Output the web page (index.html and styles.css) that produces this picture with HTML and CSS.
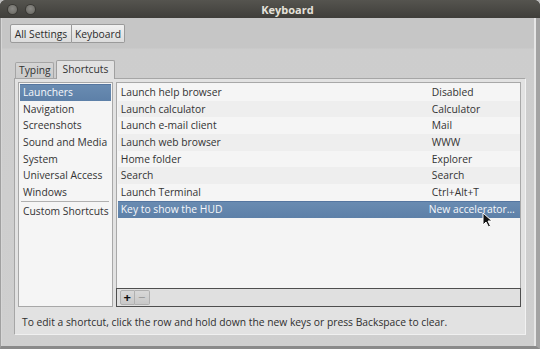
FILE: index.html
```html
<!DOCTYPE html>
<html>
<head>
<meta charset="utf-8">
<link rel="stylesheet" href="styles.css">
</head>
<body>
<div class="window">
  <div class="titlebar">
    <div class="wbtns"><span class="wbtn"></span><span class="wbtn"></span></div>
    <div class="title">Keyboard</div>
  </div>
  <div class="body">
    <div class="crumbs">
      <button class="crumb">All Settings</button><button class="crumb">Keyboard</button>
    </div>
    <div class="tabs">
      <div class="tab">Typing</div>
      <div class="tab active">Shortcuts</div>
    </div>
    <div class="panel">
      <div class="main">
        <div class="cats">
          <div class="row sel">Launchers</div>
          <div class="row">Navigation</div>
          <div class="row">Screenshots</div>
          <div class="row">Sound and Media</div>
          <div class="row">System</div>
          <div class="row">Universal Access</div>
          <div class="row">Windows</div>
          <div class="sep"></div>
          <div class="row">Custom Shortcuts</div>
        </div>
        <div class="right">
          <div class="tree">
            <div class="trow"><span class="name">Launch help browser</span><span class="accel">Disabled</span></div>
            <div class="trow alt"><span class="name">Launch calculator</span><span class="accel">Calculator</span></div>
            <div class="trow"><span class="name">Launch e-mail client</span><span class="accel">Mail</span></div>
            <div class="trow alt"><span class="name">Launch web browser</span><span class="accel">WWW</span></div>
            <div class="trow"><span class="name">Home folder</span><span class="accel">Explorer</span></div>
            <div class="trow alt"><span class="name">Search</span><span class="accel">Search</span></div>
            <div class="trow"><span class="name">Launch Terminal</span><span class="accel">Ctrl+Alt+T</span></div>
            <div class="trow sel"><span class="name">Key to show the HUD</span><span class="accel sel-accel">New accelerator…</span></div>
            <svg class="cursor" width="11" height="16" viewBox="0 0 11 16"><path d="M1 1 L1 13 L4 10 L6.5 15 L8.5 14 L6 9 L10 9 Z" fill="#111" stroke="#fff" stroke-width="1"/></svg>
          </div>
          <div class="toolbar">
            <span class="tbtn plus">+</span><span class="tbtn minus">−</span>
          </div>
        </div>
      </div>
      <div class="hint">To edit a shortcut, click the row and hold down the new keys or press Backspace to clear.</div>
    </div>
  </div>
</div>
</body>
</html>
```
FILE: styles.css
```css
* { box-sizing: border-box; }
html, body { margin: 0; padding: 0; }
body {
  width: 540px; height: 349px; overflow: hidden;
  background: #bdbdbd;
  font-family: "Open Sans", "DejaVu Sans", sans-serif;
  font-size: 10.3px;
  color: #2f2f2f;
}
.window {
  width: 540px; height: 349px;
  display: flex; flex-direction: column;
  border-radius: 6px 6px 0 0;
  overflow: hidden;
  background: #3c3b37;
}
.titlebar {
  height: 18px; flex: none;
  background: linear-gradient(#55544f, #3f3e3a);
  display: flex; align-items: center;
}
.wbtns { display: flex; gap: 9px; padding-left: 8px; width: 35px; }
.wbtn {
  flex: none;
  width: 9px; height: 9px; border-radius: 50%;
  background: radial-gradient(circle at 50% 40%, #8a8985, #66655f);
  box-shadow: 0 0 0 1px #3a3935;
}
.title {
  flex: 1; text-align: center;
  color: #e4e1da; font-weight: bold; font-size: 11px;
}
.body {
  flex: 1;
  background: linear-gradient(#c6c6c6 0px, #c6c6c6 30px, #cdcdcd 31px, #cfcfcf);
  border-left: 1px solid #a0a0a0;
  border-right: 4px solid #a3a3a3;
  border-bottom: 3px solid #8a8a8a;
  box-shadow: inset -2px 0 0 #e6e6e6, inset 1px 0 0 #d6d6d6;
  padding: 6px 0 0 9px;
  display: flex; flex-direction: column;
}
.crumbs { display: flex; height: 19px; }
.crumb {
  font-family: inherit; font-size: 10.3px; color: #2b2b2b;
  height: 19px; padding: 0 2px; margin: 0;
  white-space: nowrap;
  background: linear-gradient(#f1f1f1, #dcdcdc);
  border: 1px solid #9a9a9a;
  line-height: 16px;
}
.crumb:first-child { border-radius: 2px 0 0 2px; width: 62px; }
.crumb:last-child { border-left: none; border-radius: 0 2px 2px 0; width: 53px; }
.tabs {
  display: flex; align-items: flex-end;
  margin-top: 17px; margin-left: 5px; height: 18px;
  position: relative; z-index: 1;
}
.tab {
  height: 16px; padding: 0 3px; line-height: 15px;
  background: linear-gradient(#d4d4d4, #cbcbcb);
  border: 1px solid #a5a5a5; border-bottom: none;
  border-radius: 2px 2px 0 0;
  color: #333;
  width: 39px; text-align: center;
}
.tab.active {
  height: 19px; width: 59px; margin-left: 2px;
  background: #e2e2e2;
  border-color: #a0a0a0;
  line-height: 17px;
  margin-bottom: -1px;
}
.panel {
  width: 512px; height: 257px;
  margin-left: 4px;
  background: #e2e2e2;
  border: 1px solid #a6a6a6;
  border-right-color: #f2f2f2;
  border-bottom-color: #f0f0f0;
  padding: 3px 4px 0 3px;
  display: flex; flex-direction: column;
}
.main { display: flex; gap: 3px; height: 225px; }
.cats {
  width: 95px; height: 225px;
  background: #f5f5f5;
  border: 1px solid #a8a8a8;
  padding: 1px 1px 0 1px;
}
.row {
  height: 16.7px; line-height: 16.7px;
  padding-left: 3px; white-space: nowrap;
  color: #333;
}
.row.sel, .trow.sel {
  background: linear-gradient(#6a8cb2, #5d80a8);
  color: #f6f8fb;
  box-shadow: inset 0 1px 0 #5576a0;
}
.sep { height: 2px; border-top: 1px solid #b0b0b0; margin: 0 2px 0 1px; }
.right { width: 406px; display: flex; flex-direction: column; }
.tree {
  height: 206px;
  background: #f4f4f4;
  border: 1px solid #a8a8a8; border-bottom: none;
  padding: 1px 0 0 1px;
  position: relative;
}
.trow {
  height: 16.7px; line-height: 16.7px;
  display: flex; white-space: nowrap;
  background: #f5f5f5;
  color: #333;
}
.trow.alt { background: #eeeeee; }
.trow .name { width: 311px; padding-left: 3px; }
.trow .accel { padding-left: 3px; }
.trow .sel-accel { padding-left: 0; }
.cursor { position: absolute; left: 365px; top: 129px; }
.toolbar {
  height: 19px;
  background: #e0e0e0;
  border: 1px solid #4e4e4e;
  padding: 1px 0 0 3px;
  display: flex;
}
.tbtn {
  width: 15px; height: 15px;
  display: flex; align-items: center; justify-content: center;
  font-size: 13px; font-weight: bold; line-height: 15px;
  background: linear-gradient(#d8d8d8, #c8c8c8);
  border: 1px solid #b0b0b0;
}
.tbtn.plus { color: #111; border-radius: 2px 0 0 2px; }
.tbtn.minus { color: #9a9a9a; border-left: none; border-radius: 0 2px 2px 0; font-weight: normal; }
.hint {
  margin-top: 8px; padding-left: 4px;
  color: #2f2f2f;
  white-space: nowrap;
}
```
